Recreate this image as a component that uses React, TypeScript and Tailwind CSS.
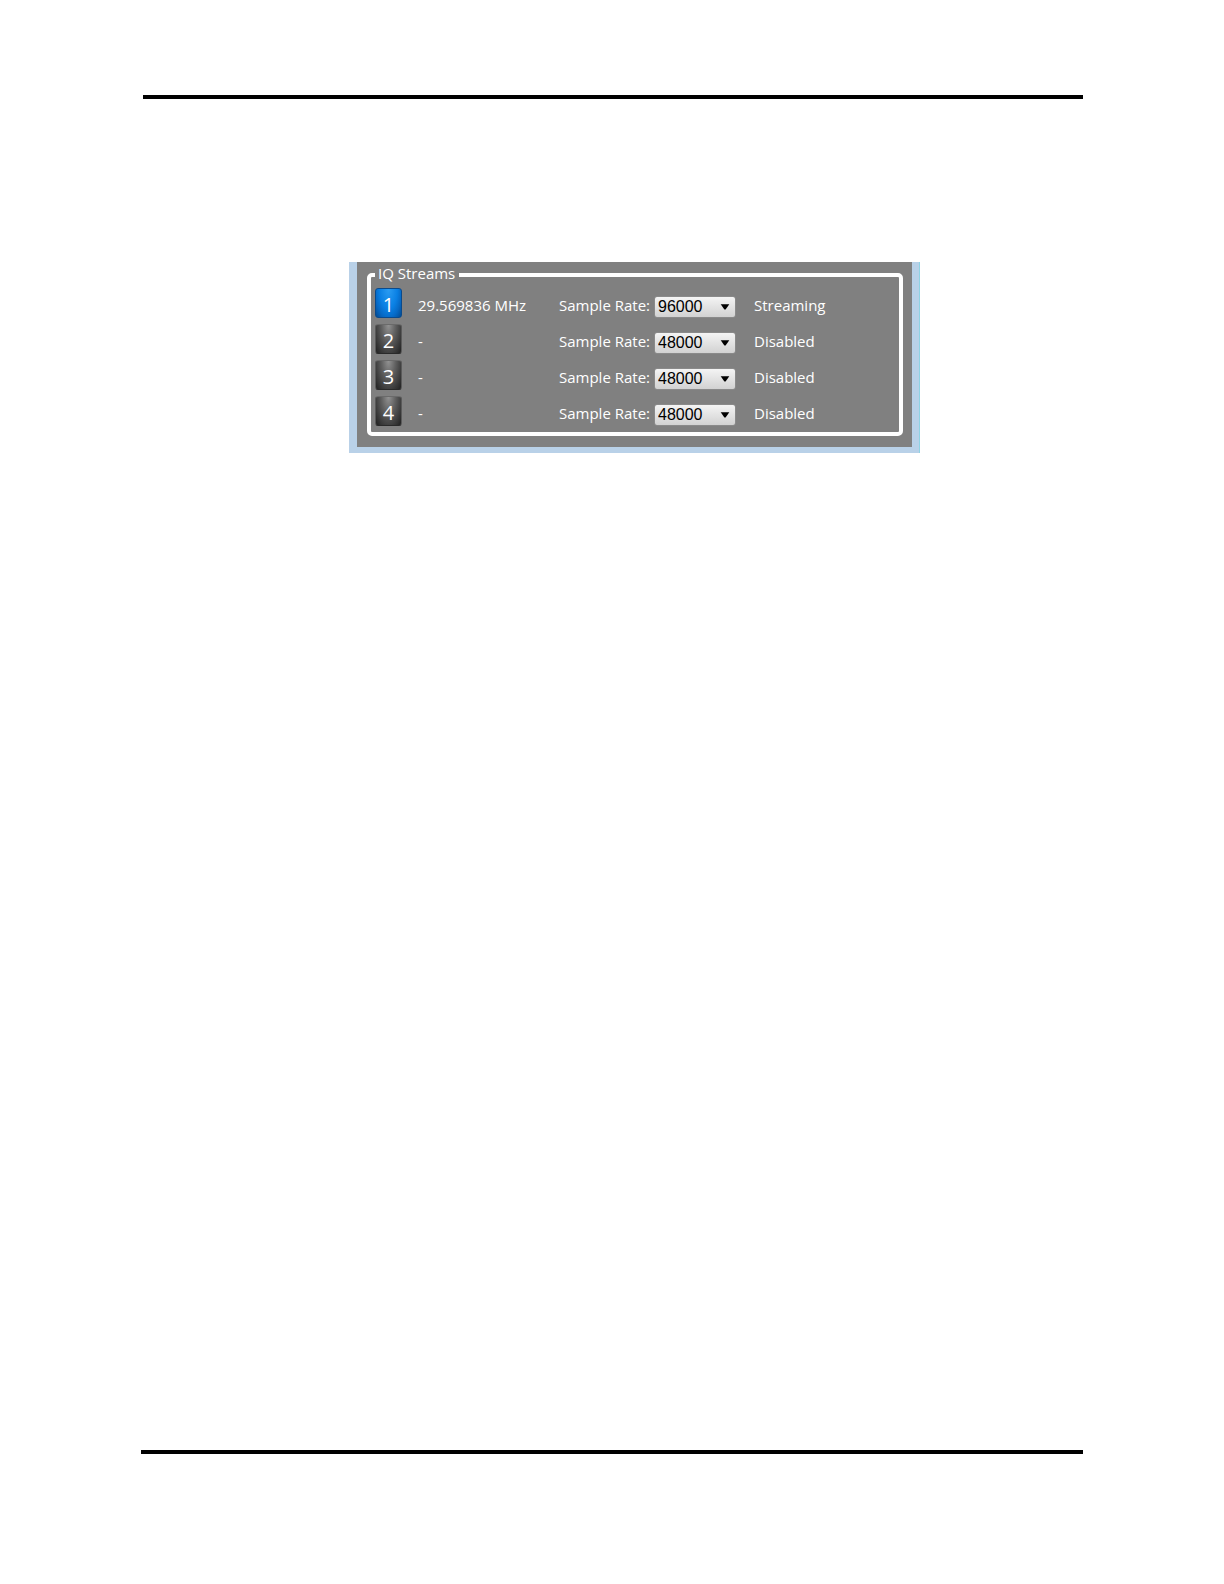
import { useState } from "react";

type Stream = {
    id: number;
    frequency: string;
    rate: string;
    active: boolean;
};

const initialStreams: Stream[] = [
    { id: 1, frequency: "29.569836 MHz", rate: "96000", active: true },
    { id: 2, frequency: "-", rate: "48000", active: false },
    { id: 3, frequency: "-", rate: "48000", active: false },
    { id: 4, frequency: "-", rate: "48000", active: false },
];

const rates = ["24000", "48000", "96000", "192000"];

const activeButton =
    "border-[#0a4a8c] bg-[radial-gradient(ellipse_at_50%_0%,#2b9cf2_0%,#0a80e4_50%,#0668c4_75%,#034a90_100%)]";
const idleButton =
    "border-x-[#5a5a5a] border-t-[#6a6a6a] border-b-[#2a2a2a] bg-[radial-gradient(ellipse_at_50%_0%,#929292_0%,#606060_40%,#404040_70%,#202020_100%)]";

const StreamRow = ({ stream, onRate }: { stream: Stream; onRate: (rate: string) => void }) => {
    const selectId = `rate-${stream.id}`;

    return (
        <div className="grid grid-cols-[43px_141px_95px_100px_1fr] items-end h-[30px]">
            <button
                type="button"
                className={`w-[27px] h-[30px] pt-1 rounded-[3px] border text-[20px] leading-[24px] text-center text-white ${
                    stream.active ? activeButton : idleButton
                }`}
            >
                {stream.id}
            </button>
            <span className="leading-[26px]">{stream.frequency}</span>
            <label htmlFor={selectId} className="leading-[26px] whitespace-nowrap">
                Sample Rate:
            </label>
            <div className="relative w-[82px] h-[22px]">
                <select
                    id={selectId}
                    value={stream.rate}
                    onChange={(e) => onRate(e.target.value)}
                    className="block appearance-none w-full h-full pl-[3px] rounded-[3px] border border-[#8a8a8a] bg-linear-to-b from-[#f4f4f4] to-[#d2d2d2] font-['Liberation_Sans',sans-serif] text-[16px] leading-[20px] text-black"
                >
                    {rates.map((rate) => (
                        <option key={rate} value={rate}>
                            {rate}
                        </option>
                    ))}
                </select>
                <svg
                    viewBox="0 0 10 6"
                    className="absolute right-1.5 top-2 w-[10px] h-[6px] pointer-events-none"
                    aria-hidden="true"
                >
                    <path d="M0.7 0.3h8.6L5.6 5.6H4.4z" fill="#000" />
                </svg>
            </div>
            <span className="leading-[26px]">{stream.active ? "Streaming" : "Disabled"}</span>
        </div>
    );
};

const IQPanel = () => {
    const [streams, setStreams] = useState(initialStreams);

    const setRate = (id: number, rate: string) => {
        setStreams(streams.map((s) => (s.id === id ? { ...s, rate } : s)));
    };

    return (
        <div className="max-w-[571px] border-r border-[#8fd3e4]">
            <section className="border-l-8 border-r-7 border-b-6 border-[#b9d1e8] bg-[#808080] pt-[3px] pb-[11px] pl-[10px] pr-[9px] font-['Open_Sans',sans-serif] text-[15px] text-white">
                <fieldset className="rounded-[5px] border-4 border-white px-1 pt-[3px] pb-1.5">
                    <legend className="pl-[3px] pr-1 pb-1 leading-[16px]">IQ Streams</legend>
                    <div className="flex flex-col gap-1.5">
                        {streams.map((stream) => (
                            <StreamRow key={stream.id} stream={stream} onRate={(rate) => setRate(stream.id, rate)} />
                        ))}
                    </div>
                </fieldset>
            </section>
        </div>
    );
};

const App = () => {
    return (
        <div className="flex flex-col min-h-screen bg-white px-[141px] pt-[95px] pb-[130px]">
            <header className="ml-0.5 border-t-4 border-black" />
            <main className="grow pt-[163px] pl-[208px]">
                <IQPanel />
            </main>
            <footer className="border-t-4 border-black" />
        </div>
    );
};

export default App;
